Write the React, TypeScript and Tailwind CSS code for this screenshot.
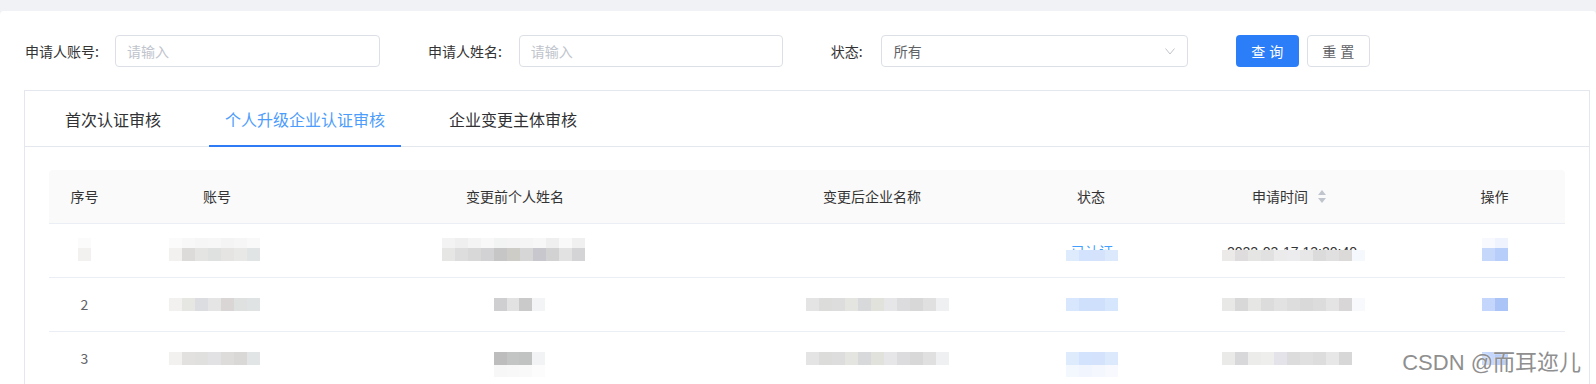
import React from 'react'

const cols = 'grid grid-cols-[71px_194px_402px_312px_126px_270px_141px]'

// pixelated (blurred) cell content
function Cells({ colors, w = 'w-[13px]', h = 'h-[13px]' }: { colors: string[]; w?: string; h?: string }) {
  return (
    <div className="flex">
      {colors.map((c, i) => (
        <div key={i} className={`${w} ${h} ${c}`} />
      ))}
    </div>
  )
}

function Field({ label, gap = 'mr-4', children }: { label: string; gap?: string; children: React.ReactNode }) {
  return (
    <div className="flex items-center">
      <span className={`${gap} text-[#333]`}>{label}</span>
      {children}
    </div>
  )
}

function SearchBar() {
  return (
    <div className="flex items-center gap-12 pl-[25px]">
      <Field label="申请人账号:">
        <input
          placeholder="请输入"
          className="h-8 w-[265px] rounded border border-[#dcdfe6] pl-[11px] text-[14px] outline-none placeholder:text-[#c0c4cc]"
        />
      </Field>
      <Field label="申请人姓名:" gap="mr-[17px]">
        <input
          placeholder="请输入"
          className="h-8 w-[264px] rounded border border-[#dcdfe6] pl-[11px] text-[14px] outline-none placeholder:text-[#c0c4cc]"
        />
      </Field>
      <Field label="状态:" gap="mr-[18px]">
        <div className="flex h-8 w-[307px] items-center justify-between rounded border border-[#dcdfe6] pl-3 pr-[12px] text-[#606266]">
          <span>所有</span>
          <svg width="10" height="7" viewBox="0 0 10 7" fill="none">
            <path d="M0.5 0.5 L5 6 L9.5 0.5" stroke="#c0c4cc" strokeWidth="1" />
          </svg>
        </div>
      </Field>
      <div className="flex items-center gap-2">
        <button className="flex h-8 w-[63px] items-center justify-center gap-1 rounded bg-[#2c7ef8] text-white">
          <span>查</span>
          <span>询</span>
        </button>
        <button className="flex h-8 w-[63px] items-center justify-center gap-1 rounded border border-[#dcdfe6] bg-white text-[#606266]">
          <span>重</span>
          <span>置</span>
        </button>
      </div>
    </div>
  )
}

function Tabs() {
  const tabs = ['首次认证审核', '个人升级企业认证审核', '企业变更主体审核']
  const active = 1
  return (
    <div className="flex h-[56px] gap-8 border-b border-[#e4e7ed] pl-[24px]">
      {tabs.map((t, i) => (
        <div
          key={t}
          className={`relative flex h-full items-center px-4 text-[16px] ${i === active ? 'text-[#4c9cfb]' : 'text-[#303133]'}`}
        >
          {t}
          {i === active && <div className="absolute bottom-[-1px] left-0 right-0 h-[2px] bg-[#2e7bf5]" />}
        </div>
      ))}
    </div>
  )
}

function SortIcon() {
  return (
    <svg width="8" height="14" viewBox="0 0 8 14" className="ml-[10px]">
      <path d="M4 0 L8 5 L0 5 Z" fill="#c0c4cc" />
      <path d="M0 8 L8 8 L4 13 Z" fill="#c0c4cc" />
    </svg>
  )
}

function Table() {
  const head = ['序号', '账号', '变更前个人姓名', '变更后企业名称', '状态']
  return (
    <div className="px-[24px] pt-[23px]">
      <div className={`${cols} h-[54px] items-center rounded-t border-b border-[#ebeef5] bg-[#fafafa] text-[#333]`}>
        {head.map((h) => (
          <div key={h} className="flex justify-center">
            {h}
          </div>
        ))}
        <div className="flex items-center justify-center">
          申请时间
          <SortIcon />
        </div>
        <div className="flex justify-center">操作</div>
      </div>

      {/* row 1 */}
      <div className={`${cols} h-[54px] items-center border-b border-[#ebeef5] text-[#606266]`}>
        <div className="-mt-[3px] flex flex-col pl-[29px]">
          <Cells colors={['bg-[#fbfbfb]']} h="h-[10px]" />
          <Cells colors={['bg-[#f2f1f0]']} />
        </div>
        <div className="-mt-[3px] flex flex-col pl-[49px]">
          <Cells
            h="h-[10px]"
            colors={['bg-[#fbfbfb]', 'bg-[#f8f8f8]', 'bg-[#f6f6f6]', 'bg-[#f6f7f6]', 'bg-[#f4f4f4]', 'bg-[#f6f6f6]', 'bg-[#f9f9f9]']}
          />
          <Cells
            colors={['bg-[#f2f1f0]', 'bg-[#dcdbd9]', 'bg-[#e4e4e2]', 'bg-[#dfe1e0]', 'bg-[#e6e4e2]', 'bg-[#e8e8e7]', 'bg-[#e0e4e4]']}
          />
        </div>
        <div className="-mt-[3px] flex flex-col pl-[128px]">
          <Cells
            h="h-[10px]"
            colors={['bg-[#f3f3f3]', 'bg-[#efefef]', 'bg-[#f4f4f4]', 'bg-[#f8f8f8]', 'bg-[#f2f4f3]', 'bg-[#f4f4f4]', 'bg-[#f5f5f5]', 'bg-[#f7f7f7]', 'bg-[#efefef]', 'bg-[#f9f9f9]', 'bg-[#f0f0f0]']}
          />
          <Cells
            colors={['bg-[#e6e6e5]', 'bg-[#dddddd]', 'bg-[#d9d8d9]', 'bg-[#d2d2d4]', 'bg-[#c6c6c6]', 'bg-[#cdccc6]', 'bg-[#d6d6d6]', 'bg-[#c8c7cd]', 'bg-[#d2d2d2]', 'bg-[#e2e2e2]', 'bg-[#d4d4d6]']}
          />
        </div>
        <div />
        <div className="pl-[38px]">
          <div className="relative -mt-[3px] h-[23px] w-[52px]">
            <span className="absolute left-[5px] top-[6px] leading-[14px] text-[#409eff]">已认证</span>
            <div className="absolute bottom-0 left-0">
              <Cells h="h-[11px]" colors={['bg-[#deebfd]', 'bg-[#d3e3fd]', 'bg-[#d5e2fc]', 'bg-[#dce9fc]']} />
            </div>
          </div>
        </div>
        <div className="pl-[68px]">
          <div className="relative -mt-[3px] h-[23px] w-[143px]">
            <span className="absolute left-[5px] top-[7px] whitespace-nowrap font-['Liberation_Sans',sans-serif] leading-[14px] text-[#333]">
              2022-03-17 13:20:40
            </span>
            <div className="absolute bottom-0 left-0">
              <Cells
                h="h-[11px]"
                colors={['bg-[#eceae8]', 'bg-[#dedcdd]', 'bg-[#e5e5e3]', 'bg-[#e2e1e2]', 'bg-[#ebebeb]', 'bg-[#ececee]', 'bg-[#e8e7e8]', 'bg-[#dcdbdb]', 'bg-[#e0e0e0]', 'bg-[#dcdad8]', 'bg-[#f5f8fd]']}
              />
            </div>
          </div>
        </div>
        <div className="-mt-[3px] flex flex-col pl-[58px]">
          <Cells h="h-[10px]" colors={['bg-[#f7f9fe]', 'bg-[#eef3fd]']} />
          <Cells colors={['bg-[#c5d7fb]', 'bg-[#b7cdfa]']} />
        </div>
      </div>

      {/* row 2 */}
      <div className={`${cols} h-[54px] items-center border-b border-[#ebeef5] text-[#606266]`}>
        <div className="flex justify-center">2</div>
        <div className="pl-[49px]">
          <Cells
            colors={['bg-[#f2f1f0]', 'bg-[#e6e6e2]', 'bg-[#dcdde0]', 'bg-[#e5e5e6]', 'bg-[#dad6d6]', 'bg-[#dfe0e0]', 'bg-[#dfe3e4]']}
          />
        </div>
        <div className="pl-[180px]">
          <Cells w="w-[12.7px]" colors={['bg-[#cfcfd1]', 'bg-[#e2e2e2]', 'bg-[#cacaca]', 'bg-[#f3f4f6]']} />
        </div>
        <div className="pl-[90px]">
          <Cells
            colors={['bg-[#e4e4e4]', 'bg-[#dcdcdb]', 'bg-[#dcdddc]', 'bg-[#e4e4e0]', 'bg-[#d8d9db]', 'bg-[#e2e2dd]', 'bg-[#e6e6e8]', 'bg-[#dcdcde]', 'bg-[#d8d8d8]', 'bg-[#e0e0e0]', 'bg-[#eff0f2]']}
          />
        </div>
        <div className="pl-[38px]">
          <Cells colors={['bg-[#d8e7fd]', 'bg-[#cfe0fd]', 'bg-[#cfe0fd]', 'bg-[#d6e6fd]']} />
        </div>
        <div className="pl-[68px]">
          <Cells
            colors={['bg-[#e8e8e6]', 'bg-[#d8d8d9]', 'bg-[#e6e6e4]', 'bg-[#dcdcdc]', 'bg-[#e2e2e2]', 'bg-[#dedddd]', 'bg-[#dad9da]', 'bg-[#dcdcdc]', 'bg-[#e4e4e4]', 'bg-[#d8d6d6]', 'bg-[#f7f9fc]']}
          />
        </div>
        <div className="pl-[58px]">
          <Cells colors={['bg-[#c4d6fb]', 'bg-[#aac4f8]']} />
        </div>
      </div>

      {/* row 3 */}
      <div className={`${cols} h-[54px] items-center border-b border-[#ebeef5] text-[#606266]`}>
        <div className="flex justify-center">3</div>
        <div className="pl-[49px]">
          <Cells
            colors={['bg-[#f2f1f0]', 'bg-[#e2e1df]', 'bg-[#e0e0de]', 'bg-[#e2e2e4]', 'bg-[#dddcda]', 'bg-[#d9d8d7]', 'bg-[#e1e5e6]']}
          />
        </div>
        <div className="mt-[12px] flex flex-col pl-[180px]">
          <Cells w="w-[12.7px]" colors={['bg-[#bdbdbe]', 'bg-[#c3c5c4]', 'bg-[#c1c2c2]', 'bg-[#f2f3f4]']} />
          <Cells w="w-[12.7px]" h="h-[12px]" colors={['bg-[#f7f7f7]', 'bg-[#f8f8f8]', 'bg-[#f9f9f9]', 'bg-[#fcfcfc]']} />
        </div>
        <div className="pl-[90px]">
          <Cells
            colors={['bg-[#e4e4e4]', 'bg-[#dcdcdb]', 'bg-[#dcdddc]', 'bg-[#e4e4e0]', 'bg-[#d8d9db]', 'bg-[#e2e2dd]', 'bg-[#e6e6e8]', 'bg-[#dcdcde]', 'bg-[#d8d8d8]', 'bg-[#e0e0e0]', 'bg-[#eff0f2]']}
          />
        </div>
        <div className="mt-[12px] flex flex-col pl-[38px]">
          <Cells colors={['bg-[#deebfd]', 'bg-[#d3e3fd]', 'bg-[#d5e2fc]', 'bg-[#dce9fc]']} />
          <Cells h="h-[12px]" colors={['bg-[#f3f7fe]', 'bg-[#f1f5fe]', 'bg-[#f4f8fe]', 'bg-[#f7f9fe]']} />
        </div>
        <div className="pl-[68px]">
          <Cells
            colors={['bg-[#eaeae8]', 'bg-[#d8d8da]', 'bg-[#ecedeb]', 'bg-[#eeeeec]', 'bg-[#e3e3e9]', 'bg-[#dcdcdc]', 'bg-[#e0e0e0]', 'bg-[#dddddd]', 'bg-[#e7e7e7]', 'bg-[#d7d7d7]']}
          />
        </div>
        <div className="pl-[58px]">
          <Cells colors={['bg-[#c4d6fb]', 'bg-[#b0c8f9]']} />
        </div>
      </div>
    </div>
  )
}

export default function App() {
  return (
    <div className="relative h-[384px] overflow-hidden bg-[#f0f2f5] pt-[11px] font-['Noto_Sans_CJK_SC',sans-serif] text-[14px]">
      <div className="h-full rounded-t bg-white pt-6">
        <SearchBar />
        <div className="ml-[24px] mr-[6px] mt-[23px] border border-[#e4e7ed]">
          <Tabs />
          <Table />
        </div>
      </div>
      <div className="absolute right-[15px] top-[349px] font-['Liberation_Sans','Noto_Sans_CJK_SC',sans-serif] text-[22px] leading-[28px] text-[#8f8f8f] [text-shadow:0_0_2px_#fff]">
        CSDN @而耳迩儿
      </div>
    </div>
  )
}
